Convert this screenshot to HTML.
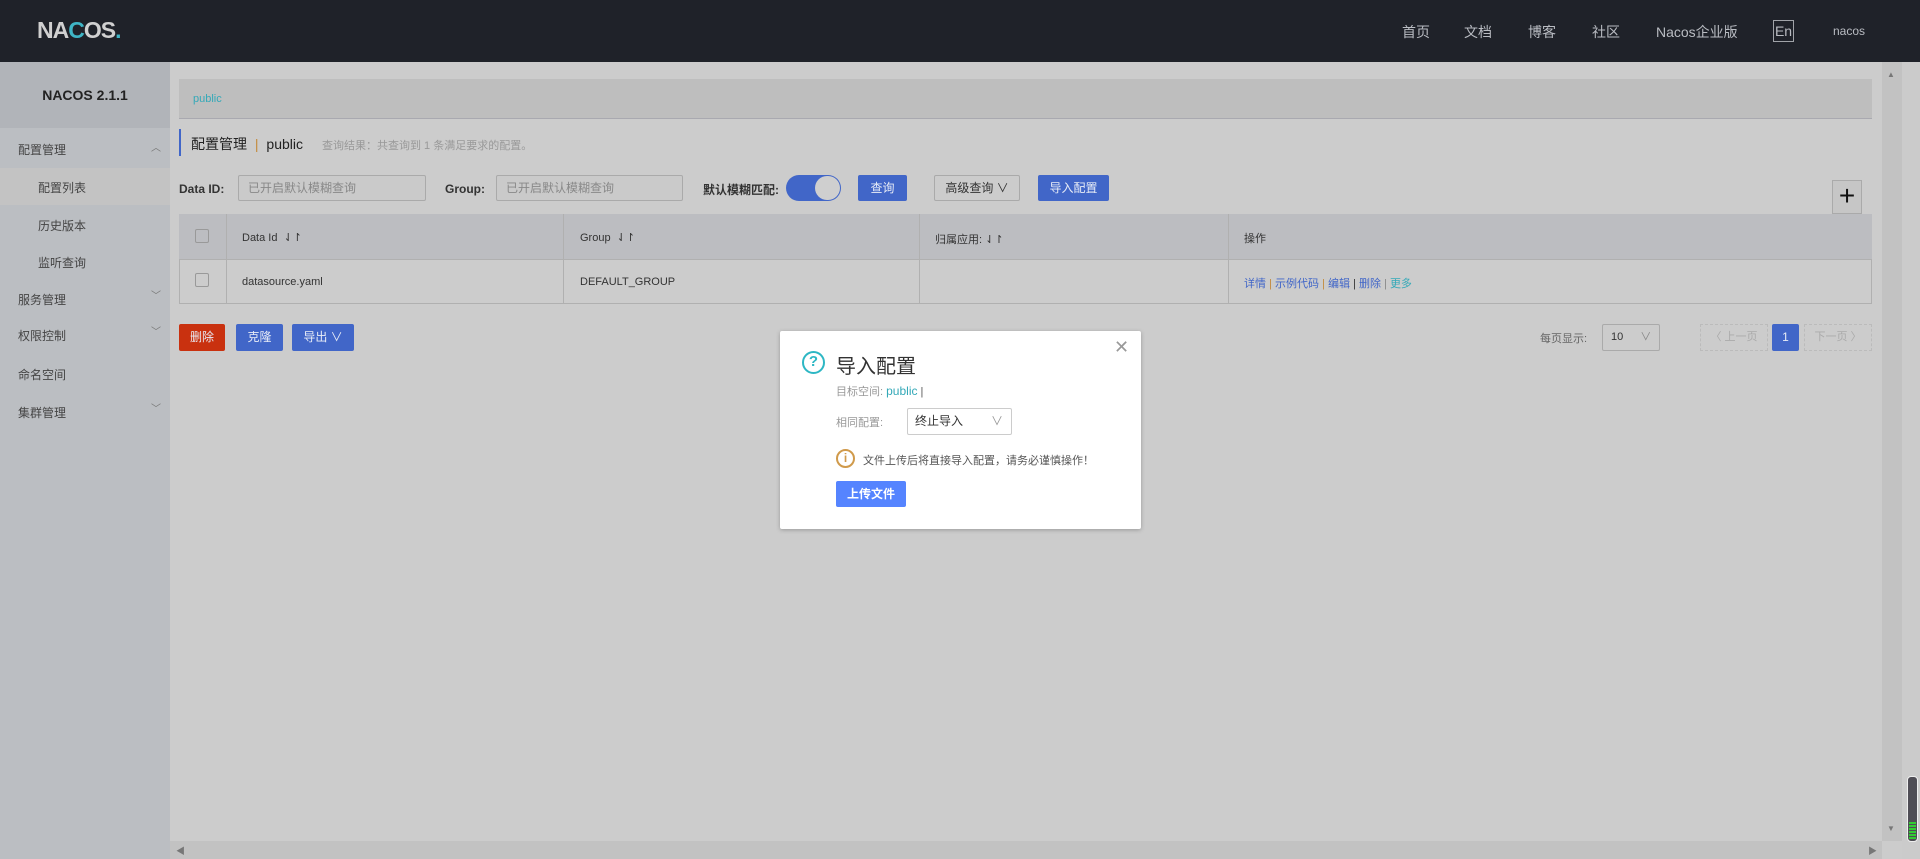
<!DOCTYPE html>
<html><head><meta charset="utf-8"><style>
*{margin:0;padding:0;box-sizing:border-box}
body{width:1920px;height:859px;overflow:hidden;background:#cccccc;font-family:"Liberation Sans","Noto Sans CJK SC",sans-serif;font-size:12px;color:#333;position:relative}
.a{position:absolute}
.hdr{left:0;top:0;width:1920px;height:62px;background:#1f2229}
.nav{top:22px;color:#b9bcc2;font-size:14px}
.side{left:0;top:62px;width:170px;height:797px;background:#bbbec2}
.side .t{left:0;top:0;width:170px;height:66px;background:#b1b4b9;text-align:center;line-height:66px;font-weight:bold;font-size:14px;color:#222}
.mi{left:18px;font-size:12px;color:#444}
.sub{left:38px;font-size:12px;color:#444}
.chev{left:151px;font-size:10px;color:#777}
.inp{height:26px;border:1px solid #aaa;background:#cacaca;color:#888;font-size:12px;line-height:24px;padding-left:9px;border-radius:2px}
.btn{background:#4166c8;color:#e8ecf6;text-align:center;border-radius:2px;font-size:12px}
.lbl{font-weight:bold;color:#333;font-size:12px}
</style></head><body>
<div class="a hdr"></div>
<div class="a" style="left:37px;top:17px;font-size:23px;font-weight:bold;color:#d0d0d0;letter-spacing:-1px">NA<span style="color:#3fb6c6">C</span>OS<span style="color:#3fb6c6">.</span></div>
<div class="a nav" style="left:1402px">首页</div>
<div class="a nav" style="left:1464px">文档</div>
<div class="a nav" style="left:1528px">博客</div>
<div class="a nav" style="left:1592px">社区</div>
<div class="a nav" style="left:1656px">Nacos企业版</div>
<div class="a" style="left:1773px;top:20px;width:21px;height:22px;border:1px solid #a0a3a8;color:#b9bcc2;font-size:14px;text-align:center;line-height:20px">En</div>
<div class="a nav" style="left:1833px;top:24px;font-size:12px">nacos</div>

<div class="a side">
<div class="a t">NACOS 2.1.1</div>
<div class="a" style="left:0;top:106px;width:170px;height:37px;background:#c3c3c3"></div>
</div>
<div class="a mi" style="top:141px">配置管理</div><div class="a chev" style="top:139px">︿</div>
<div class="a sub" style="top:179px">配置列表</div>
<div class="a sub" style="top:217px">历史版本</div>
<div class="a sub" style="top:254px">监听查询</div>
<div class="a mi" style="top:291px">服务管理</div><div class="a chev" style="top:287px">﹀</div>
<div class="a mi" style="top:327px">权限控制</div><div class="a chev" style="top:323px">﹀</div>
<div class="a mi" style="top:366px">命名空间</div>
<div class="a mi" style="top:404px">集群管理</div><div class="a chev" style="top:400px">﹀</div>

<div class="a" style="left:179px;top:79px;width:1693px;height:40px;background:#bebebe;border-bottom:1px solid #a9a9b0"></div>
<div class="a" style="left:193px;top:93px;color:#34a9b8;font-size:11px">public</div>
<div class="a" style="left:179px;top:129px;width:2px;height:27px;background:#4166c8"></div>
<div class="a" style="left:191px;top:134px;font-size:14px;color:#222">配置管理 <span style="color:#c38a3c;margin:0 4px">|</span> public</div>
<div class="a" style="left:322px;top:137px;font-size:11px;color:#999">查询结果：共查询到 1 条满足要求的配置。</div>

<div class="a lbl" style="left:179px;top:182px">Data ID:</div>
<div class="a inp" style="left:238px;top:175px;width:188px">已开启默认模糊查询</div>
<div class="a lbl" style="left:445px;top:182px">Group:</div>
<div class="a inp" style="left:496px;top:175px;width:187px">已开启默认模糊查询</div>
<div class="a lbl" style="left:703px;top:181px">默认模糊匹配:</div>
<div class="a" style="left:786px;top:175px;width:55px;height:26px;border-radius:13px;background:#4166c8"></div>
<div class="a" style="left:815px;top:176px;width:25px;height:24px;border-radius:12px;background:#cfcfcf"></div>
<div class="a btn" style="left:858px;top:175px;width:49px;height:26px;line-height:26px">查询</div>
<div class="a" style="left:934px;top:175px;width:86px;height:26px;border:1px solid #aaa;border-radius:2px;line-height:24px;text-align:center;color:#333">高级查询 ∨</div>
<div class="a btn" style="left:1038px;top:175px;width:71px;height:26px;line-height:26px">导入配置</div>
<div class="a" style="left:1832px;top:180px;width:30px;height:34px;border:1px solid #aaa;background:#c6c6c6;font-size:28px;line-height:30px;text-align:center;color:#111">+</div>

<div class="a" style="left:179px;top:214px;width:1693px;height:90px;border:1px solid #b0b0b0"></div>
<div class="a" style="left:179px;top:214px;width:1693px;height:46px;background:#bcbdc1;border-bottom:1px solid #b0b0b0"></div>
<div class="a" style="left:226px;top:214px;width:1px;height:90px;background:#b0b0b0"></div>
<div class="a" style="left:563px;top:214px;width:1px;height:90px;background:#b0b0b0"></div>
<div class="a" style="left:919px;top:214px;width:1px;height:90px;background:#b0b0b0"></div>
<div class="a" style="left:1228px;top:214px;width:1px;height:90px;background:#b0b0b0"></div>
<div class="a" style="left:195px;top:229px;width:14px;height:14px;border:1px solid #999;border-radius:2px"></div>
<div class="a" style="left:195px;top:273px;width:14px;height:14px;border:1px solid #999;border-radius:2px"></div>
<div class="a" style="left:242px;top:231px;font-size:11px">Data Id &nbsp;⇃↾</div>
<div class="a" style="left:580px;top:231px;font-size:11px">Group &nbsp;⇃↾</div>
<div class="a" style="left:935px;top:231px;font-size:11px">归属应用: ⇃↾</div>
<div class="a" style="left:1244px;top:230px;font-size:11px">操作</div>
<div class="a" style="left:242px;top:276px;font-size:11px">datasource.yaml</div>
<div class="a" style="left:580px;top:276px;font-size:11px">DEFAULT_GROUP</div>
<div class="a" style="left:1244px;top:275px;font-size:11px;color:#4166c8">详情 <span style="color:#c38a3c">|</span> 示例代码 <span style="color:#c38a3c">|</span> 编辑 <span style="color:#333">|</span> 删除 <span style="color:#888">|</span> <span style="color:#34a9b8">更多</span></div>

<div class="a btn" style="left:179px;top:324px;width:46px;height:27px;line-height:27px;background:#c9310f">删除</div>
<div class="a btn" style="left:236px;top:324px;width:47px;height:27px;line-height:27px">克隆</div>
<div class="a btn" style="left:292px;top:324px;width:62px;height:27px;line-height:27px">导出 ∨</div>

<div class="a" style="left:1540px;top:330px;font-size:11px;color:#666">每页显示:</div>
<div class="a" style="left:1602px;top:324px;width:58px;height:27px;border:1px solid #aaa;border-radius:2px;font-size:11px;line-height:25px;padding-left:8px">10 <span style="margin-left:14px;color:#888">∨</span></div>
<div class="a" style="left:1700px;top:324px;width:68px;height:27px;border:1px dashed #bbb;color:#aaa;font-size:11px;line-height:25px;text-align:center">〈 上一页</div>
<div class="a btn" style="left:1772px;top:324px;width:27px;height:27px;line-height:27px">1</div>
<div class="a" style="left:1804px;top:324px;width:68px;height:27px;border:1px dashed #bbb;color:#aaa;font-size:11px;line-height:25px;text-align:center">下一页 〉</div>

<div class="a" style="left:1882px;top:62px;width:20px;height:779px;background:#c2c2c2"></div>
<div class="a" style="left:1902px;top:62px;width:18px;height:797px;background:#cbcbcb"></div>
<div class="a" style="left:1887px;top:70px;font-size:8px;color:#777">▲</div>
<div class="a" style="left:1887px;top:824px;font-size:8px;color:#777">▼</div>
<div class="a" style="left:1907px;top:776px;width:11px;height:66px;border-radius:4px;background:#4f4d55;border:1px solid #eee"></div>
<div class="a" style="left:1909px;top:822px;width:7px;height:18px;background:repeating-linear-gradient(#3c3 0 2px,#4f4d55 2px 3px)"></div>
<div class="a" style="left:170px;top:841px;width:1712px;height:18px;background:#c2c2c2"></div>
<div class="a" style="left:176px;top:844px;font-size:9px;color:#777">◀</div>
<div class="a" style="left:1868px;top:844px;font-size:9px;color:#777">▶</div>

<div class="a" style="left:780px;top:331px;width:361px;height:198px;background:#fff;box-shadow:0 1px 4px rgba(0,0,0,.25);border-radius:2px"></div>
<div class="a" style="left:1114px;top:337px;font-size:18px;color:#999;font-weight:300">✕</div>
<div class="a" style="left:802px;top:351px;width:23px;height:23px;border:2.5px solid #2db7c4;border-radius:50%;color:#2db7c4;font-weight:bold;font-size:15px;text-align:center;line-height:18px">?</div>
<div class="a" style="left:836px;top:350px;font-size:20px;color:#333">导入配置</div>
<div class="a" style="left:836px;top:383px;font-size:11px;color:#999">目标空间: <span style="color:#34a9b8;font-size:12px">public</span> <span style="color:#555">|</span></div>
<div class="a" style="left:836px;top:414px;font-size:11px;color:#999">相同配置:</div>
<div class="a" style="left:907px;top:408px;width:105px;height:27px;border:1px solid #ccc;border-radius:2px;font-size:12px;line-height:25px;padding-left:7px;color:#333">终止导入<span class="a" style="left:83px;top:0;color:#999">∨</span></div>
<div class="a" style="left:836px;top:449px;width:19px;height:19px;border:2px solid #d09a4b;border-radius:50%;color:#d09a4b;font-size:12px;text-align:center;line-height:15px;font-weight:bold">i</div>
<div class="a" style="left:863px;top:452px;font-size:11px;color:#555">文件上传后将直接导入配置，请务必谨慎操作！</div>
<div class="a btn" style="left:836px;top:481px;width:70px;height:26px;line-height:26px;background:#5584ff;color:#fff;font-weight:bold">上传文件</div>
</body></html>
